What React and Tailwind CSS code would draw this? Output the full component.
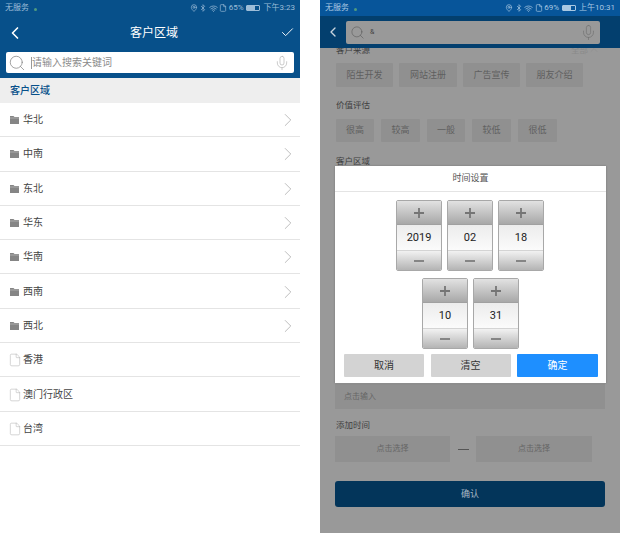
import React from "react";
import { Search, Mic, ChevronLeft, ChevronRight, Check, File, Bluetooth, Wifi, ChevronUp, MapPin } from "lucide-react";

const FONT = "font-['Roboto','Noto_Sans_CJK_SC','Noto_Sans',sans-serif]";

function Status({ left, pct, time, dim }) {
  const c = dim ? "text-[#a9c8e2]" : "text-[#9dbdd8]";
  return (
    <div className={`h-[16px] flex items-center justify-between pl-[5px] pr-[5px] text-[8px] leading-none ${c}`}>
      <div className="flex items-center gap-[5px]">
        <span>{left}</span>
        <span className="w-[3px] h-[3px] rounded-full bg-[#4f9a80] mt-[2px]" />
      </div>
      <div className="flex items-center gap-[1.5px]">
        <MapPin size={8} strokeWidth={2} />
        <Bluetooth size={8} strokeWidth={2} />
        <Wifi size={9} strokeWidth={2} />
        <File size={8} strokeWidth={2} />
        <span>{pct}</span>
        <span className="ml-[1px] mr-[2px] w-[14px] h-[6px] border border-current rounded-[1px] flex items-center">
          <span className="w-[8px] h-[4px] bg-current" />
        </span>
        <span>{time}</span>
      </div>
    </div>
  );
}

function Folder() {
  return (
    <svg width="9" height="8" viewBox="0 0 9 8" className="shrink-0">
      <path d="M0 0h3.5l1 1H9v7H0z" fill="#858585" />
      <path d="M0 2h9" stroke="#c8c8c8" strokeWidth="0.6" />
    </svg>
  );
}

function Row({ label, leaf }) {
  return (
    <div className="h-[34.3px] pt-[1px] flex items-center pl-[10px] pr-[1px] border-b border-[#e4e4e4] bg-white">
      {leaf ? (
        <File size={14} strokeWidth={0.9} className="text-[#b0b0b0] -ml-[2px] mr-[1px] shrink-0" />
      ) : (
        <span className="mr-[4px] flex"><Folder /></span>
      )}
      <span className="text-[10px] leading-none text-[#444] flex-1">{label}</span>
      {!leaf && <ChevronRight size={22} strokeWidth={0.8} className="text-[#a5a5a5]" />}
    </div>
  );
}

function LeftPhone() {
  const rows = ["华北", "中南", "东北", "华东", "华南", "西南", "西北"];
  const leaves = ["香港", "澳门行政区", "台湾"];
  return (
    <div className="w-[300px] h-[533px] bg-white shrink-0">
      <div className="bg-[#07508a] h-[78px]">
        <Status left="无服务" pct="65%" time="下午3:23" />
        <div className="h-[33px] flex items-center justify-between pl-[5px] pr-[5px] text-white">
          <ChevronLeft size={20} strokeWidth={2} />
          <span className="ml-[3px] text-[12px] leading-none">客户区域</span>
          <Check size={15} strokeWidth={1.5} />
        </div>
        <div className="mx-[6px] mt-[3px] h-[21px] bg-white rounded-[2px] flex items-center pl-[2px] pr-[4px]">
          <Search size={18} strokeWidth={0.9} className="text-[#777]" />
          <span className="ml-[5px] w-[1px] h-[12px] bg-[#999]" />
          <span className="text-[10px] leading-none text-[#8b8b8b] flex-1">请输入搜索关键词</span>
          <Mic size={16} strokeWidth={0.9} className="text-[#aaa]" />
        </div>
      </div>
      <div className="h-[25px] bg-[#eeeeee] flex items-center pl-[10px] text-[10px] font-medium text-[#07508a]">客户区域</div>
      {rows.map((r) => <Row key={r} label={r} />)}
      {leaves.map((r) => <Row key={r} label={r} leaf />)}
    </div>
  );
}

function Chip({ w, tall, children }) {
  return (
    <div style={{ width: w }} className={`${tall ? "h-[24px]" : "h-[23px]"} bg-[#909090] rounded-[1px] flex items-center justify-center text-[9px] leading-none text-[#5f5f5f]`}>
      {children}
    </div>
  );
}

function Stepper({ value }) {
  return (
    <div className="w-[46px] h-[71px] border border-[#a8a8a8] rounded-[2px] flex flex-col overflow-hidden">
      <div className="h-[24px] bg-gradient-to-b from-[#e2e2e2] to-[#a8a8a8] flex items-center justify-center border-b border-[#a0a0a0]">
        <svg width="12" height="12" viewBox="0 0 12 12"><path d="M6 1v10M1 6h10" stroke="#757575" strokeWidth="1.8" /></svg>
      </div>
      <div className="h-[25px] bg-gradient-to-b from-[#ececec] to-[#fbfbfb] flex items-center justify-center text-[11px] leading-none text-[#222]">
        {value}
      </div>
      <div className="flex-1 bg-gradient-to-b from-[#f2f2f2] to-[#b4b4b4] flex items-center justify-center border-t border-[#d4d4d4]">
        <svg width="12" height="4" viewBox="0 0 12 4"><path d="M1 2h10" stroke="#858585" strokeWidth="1.8" /></svg>
      </div>
    </div>
  );
}

function Modal() {
  return (
    <div className="absolute left-[15px] top-[166px] w-[271px] h-[217px] bg-white shadow-[0_0_2px_rgba(0,0,0,0.25)]">
      <div className="h-[26px] border-b border-[#e4e4e4] flex items-center justify-center text-[9px] leading-none text-[#555]">时间设置</div>
      <div className="mt-[8px] flex justify-center gap-[5px] pr-[1px]">
        <Stepper value="2019" /><Stepper value="02" /><Stepper value="18" />
      </div>
      <div className="mt-[7px] flex justify-center gap-[5px]">
        <Stepper value="10" /><Stepper value="31" />
      </div>
      <div className="mt-[5px] ml-[9px] mr-[8px] flex justify-between text-[10px]">
        <div className="w-[80px] h-[23px] bg-[#d3d3d3] rounded-[1px] flex items-center justify-center text-[#333]">取消</div>
        <div className="w-[80px] h-[23px] bg-[#d3d3d3] rounded-[1px] flex items-center justify-center text-[#333]">清空</div>
        <div className="w-[81px] h-[23px] bg-[#1e8fff] rounded-[1px] flex items-center justify-center text-white">确定</div>
      </div>
    </div>
  );
}

function RightPhone() {
  return (
    <div className="relative w-[300px] h-[533px] bg-[#999999] shrink-0 overflow-hidden">
      <div className="relative z-10">
        <div className="bg-[#07559a]">
          <Status left="无服务" pct="69%" time="上午10:31" dim />
        </div>
        <div className="h-[32px] bg-[#033f6e] flex items-center pl-[5px] pr-[7px]">
          <ChevronLeft size={16} strokeWidth={2} className="text-[#c9d4de]" />
          <div className="ml-[5px] w-[254px] h-[23px] bg-[#999999] rounded-[2px] flex items-center pl-[4px] pr-[3px]">
            <Search size={15} strokeWidth={0.9} className="text-[#555]" />
            <span className="ml-[5px] text-[7px] text-[#444] flex-1">&amp;</span>
            <Mic size={17} strokeWidth={0.9} className="text-[#6e6e6e]" />
          </div>
        </div>
      </div>
      <div className="px-[16px] -mt-[5px]">
        <div className="flex items-center justify-between h-[14px] pr-[4px] text-[8.5px] leading-none">
          <span className="text-[#3f3f3f]">客户来源</span>
          <span className="flex items-center text-[#8a8a8a] text-[8.5px]">全部<ChevronUp size={12} strokeWidth={1} /></span>
        </div>
        <div className="mt-[6px] flex gap-[6px]">
          <Chip w={57} tall>陌生开发</Chip><Chip w={58} tall>网站注册</Chip><Chip w={57} tall>广告宣传</Chip><Chip w={57} tall>朋友介绍</Chip>
        </div>
        <div className="mt-[11px] h-[14px] flex items-center text-[8.5px] leading-none text-[#3f3f3f]">价值评估</div>
        <div className="mt-[7px] flex gap-[7px]">
          <Chip w={38}>很高</Chip><Chip w={39}>较高</Chip><Chip w={38}>一般</Chip><Chip w={39}>较低</Chip><Chip w={39}>很低</Chip>
        </div>
        <div className="mt-[12px] h-[14px] flex items-center text-[8.5px] leading-none text-[#3f3f3f]">客户区域</div>
      </div>
      <div className="mt-[216px] mx-[15px] h-[25px] bg-[#909090] flex items-center pl-[9px] text-[8px] leading-none text-[#666]">点击输入</div>
      <div className="mt-[9px] mx-[16px] h-[14px] flex items-center text-[8.5px] leading-none text-[#3f3f3f]">添加时间</div>
      <div className="mt-[4px] mx-[15px] flex items-center">
        <div className="w-[115px] h-[26px] bg-[#909090] flex items-center justify-center text-[8px] leading-none text-[#666]">点击选择</div>
        <div className="w-[26px] flex justify-center"><span className="w-[11px] h-[1px] bg-[#555]" /></div>
        <div className="w-[116px] h-[26px] bg-[#909090] flex items-center justify-center text-[8px] leading-none text-[#666]">点击选择</div>
      </div>
      <div className="mt-[19px] mx-[15px] h-[26px] bg-[#03355a] rounded-[3px] flex items-center justify-center text-[9px] leading-none text-[#a9b9c6]">确认</div>
      <Modal />
    </div>
  );
}

export default function App() {
  return (
    <div className={`w-[620px] h-[533px] bg-white flex gap-[20px] overflow-hidden ${FONT}`}>
      <LeftPhone />
      <RightPhone />
    </div>
  );
}
